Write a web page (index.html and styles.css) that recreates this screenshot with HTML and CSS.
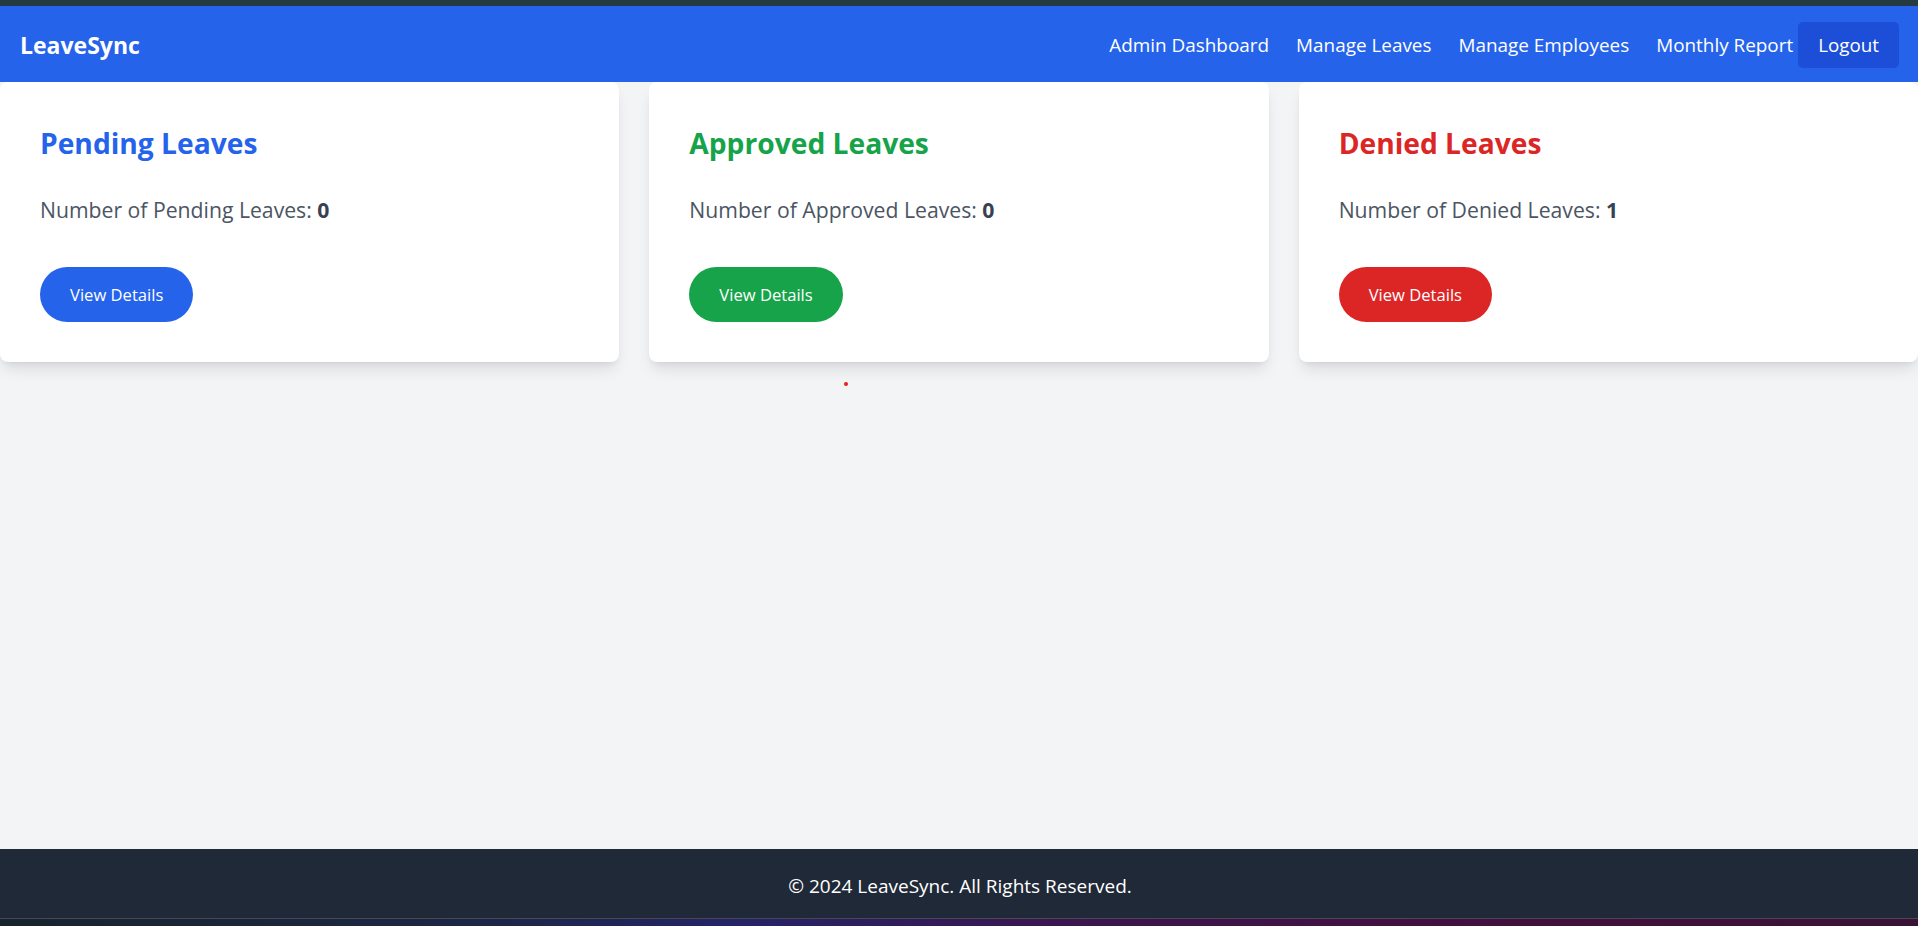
FILE: index.html
```html
<!DOCTYPE html>
<html lang="en">
<head>
<meta charset="utf-8">
<title>LeaveSync - Admin Dashboard</title>
<link rel="stylesheet" href="styles.css">
</head>
<body>
<div class="page">
  <div class="chrome-strip"></div>
  <nav class="navbar">
    <a class="brand" href="#">LeaveSync</a>
    <div class="nav-links">
      <a class="nav-link" href="#">Admin Dashboard</a>
      <a class="nav-link" href="#">Manage Leaves</a>
      <a class="nav-link" href="#">Manage Employees</a>
      <a class="nav-link" href="#">Monthly Report</a>
      <button class="logout-btn" type="button">Logout</button>
    </div>
  </nav>
  <main class="main">
    <div class="cards">
      <section class="card">
        <h2 class="card-title title-blue">Pending Leaves</h2>
        <p class="card-text">Number of Pending Leaves: <strong>0</strong></p>
        <a class="details-btn btn-blue" href="#">View Details</a>
      </section>
      <section class="card">
        <h2 class="card-title title-green">Approved Leaves</h2>
        <p class="card-text">Number of Approved Leaves: <strong>0</strong></p>
        <a class="details-btn btn-green" href="#">View Details</a>
      </section>
      <section class="card">
        <h2 class="card-title title-red">Denied Leaves</h2>
        <p class="card-text">Number of Denied Leaves: <strong>1</strong></p>
        <a class="details-btn btn-red" href="#">View Details</a>
      </section>
    </div>
    <div class="stray-dot"></div>
  </main>
  <footer class="footer">
    <p class="footer-text">© 2024 LeaveSync. All Rights Reserved.</p>
  </footer>
</div>
<div class="taskbar"></div>
</body>
</html>
```

FILE: styles.css
```css
* {
  box-sizing: border-box;
}

html, body {
  margin: 0;
  padding: 0;
}

body {
  font-family: "Open Sans", "Noto Sans", "Liberation Sans", sans-serif;
  background: #f3f4f6;
  color: #1f2937;
  overflow: hidden;
}

.page {
  min-height: 100vh;
  display: flex;
  flex-direction: column;
}

.chrome-strip {
  height: 6px;
  background: #263a42;
}

.navbar {
  height: 76px;
  background: #2563eb;
  display: flex;
  align-items: center;
  justify-content: space-between;
  padding: 1px 19px 0 20px;
}

.brand {
  color: #ffffff;
  font-weight: 700;
  font-size: 23px;
  text-decoration: none;
}

.nav-links {
  display: flex;
  align-items: center;
}

.nav-link {
  color: #ffffff;
  text-decoration: none;
  font-size: 18.9px;
  margin-right: 27px;
}

.nav-link:last-of-type {
  margin-right: 5px;
}

.logout-btn {
  font-family: inherit;
  font-size: 18.8px;
  color: #ffffff;
  background: #1d4ed8;
  border: none;
  border-radius: 5px;
  height: 46px;
  padding: 0 20px;
  cursor: pointer;
}

.main {
  flex: 1;
}

.cards {
  display: grid;
  grid-template-columns: repeat(3, 1fr);
  gap: 30px;
}

.card {
  background: #ffffff;
  border-radius: 8px;
  box-shadow: 0 10px 15px -3px rgba(0, 0, 0, 0.1), 0 4px 6px -4px rgba(0, 0, 0, 0.1);
  padding: 43px 40px 40px 40px;
  height: 280px;
}

.card-title {
  margin: 0 0 35px 0;
  font-size: 28.2px;
  line-height: 36px;
  font-weight: 700;
}

.title-blue { color: #2563eb; }
.title-green { color: #16a34a; }
.title-red { color: #dc2626; }

.card-text {
  margin: 0;
  font-size: 21.2px;
  line-height: 28px;
  color: #4b5563;
}

.card-text strong {
  font-weight: 700;
  color: #374151;
}

.details-btn {
  display: flex;
  width: fit-content;
  align-items: center;
  justify-content: center;
  margin-top: 43px;
  height: 55px;
  padding: 0 30px;
  border-radius: 28px;
  color: #ffffff;
  text-decoration: none;
  font-size: 16.6px;
}

.btn-blue { background: #2563eb; }
.btn-green { background: #16a34a; }
.btn-red { background: #dc2626; }

.stray-dot {
  width: 4px;
  height: 4px;
  border-radius: 50%;
  background: #ef1b1b;
  margin: 20px 0 0 844px;
}

.footer {
  background: #1f2937;
  height: 77px;
  display: flex;
  align-items: center;
  justify-content: center;
  padding-bottom: 4px;
}

.footer-text {
  margin: 0 0 0 2px;
  color: #ffffff;
  font-size: 19px;
}

.taskbar {
  position: fixed;
  left: 0;
  right: 0;
  bottom: 0;
  height: 8px;
  border-top: 1px solid #4b4654;
  background: linear-gradient(90deg, #17242c 0%, #1c2646 25%, #232466 38%, #3a1650 55%, #42103f 75%, #3a1236 100%);
}
```
